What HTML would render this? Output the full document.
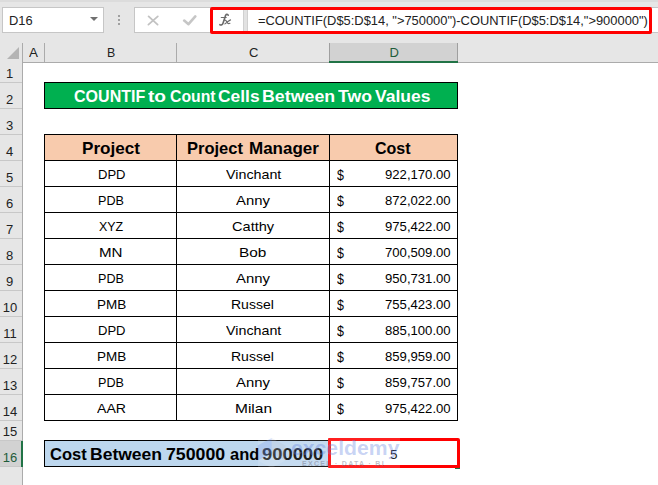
<!DOCTYPE html>
<html><head><meta charset="utf-8"><style>
*{margin:0;padding:0;box-sizing:border-box}
html,body{width:658px;height:485px;overflow:hidden;background:#fff;font-family:"Liberation Sans",sans-serif}
.a{position:absolute}
.t{position:absolute;white-space:nowrap;line-height:1;transform-origin:0 0}
</style></head><body>
<div class="a" style="left:0;top:0;width:658px;height:62px;background:#e6e6e6"></div>
<div class="a" style="left:0;top:0;width:658px;height:2px;background:#dcdcdc"></div>
<div class="a" style="left:2px;top:7px;width:102px;height:26px;background:#fff;border:1px solid #c6c6c6"></div>
<svg class="a" style="left:89px;top:16px" width="10" height="7"><path d="M1 1H9L5 5Z" fill="#707070"/></svg>
<div class="a" style="left:118px;top:15px;width:2px;height:2px;background:#a0a0a0"></div>
<div class="a" style="left:118px;top:19px;width:2px;height:2px;background:#a0a0a0"></div>
<div class="a" style="left:118px;top:23px;width:2px;height:2px;background:#a0a0a0"></div>
<div class="a" style="left:134px;top:7px;width:80px;height:26px;background:#fff;border:1px solid #c6c6c6"></div>
<svg class="a" style="left:146px;top:14px" width="14" height="13"><path d="M2.6 2.4L11.6 10.6M11.8 2.4L2.4 10.6" stroke="#c2c2c2" stroke-width="1.8" stroke-linecap="round" fill="none"/></svg>
<svg class="a" style="left:182px;top:14px" width="15" height="13"><path d="M2.2 6.6L6.5 10.2L13.3 2.4" stroke="#c6c6c6" stroke-width="2.6" stroke-linecap="round" stroke-linejoin="round" fill="none"/></svg>
<div class="a" style="left:212px;top:7px;width:450px;height:26px;background:#fff;border:1px solid #c6c6c6"></div>
<svg class="a" style="left:214px;top:10px" width="24" height="20" viewBox="0 0 24 20"><g fill="none" stroke="#6a6a6a" stroke-linecap="round"><path d="M14.2 5.2C13.7 4.2 12.4 4 11.8 5C11.4 5.6 11.2 6.6 10.9 7.6L9 13.3C8.5 14.8 7.3 15.4 5.9 14.7" stroke-width="1.6"/><path d="M7.3 7.5H12.2" stroke-width="1.2"/><path d="M10.6 10.1C11.5 9.8 12 10.2 12.5 11.2L13.3 12.8C13.7 13.6 14.6 13.8 15.9 13.3M16.5 9.9C15 10.6 12.5 12.6 10.9 13.9" stroke-width="1.2"/></g></svg>
<div class="a" style="left:243px;top:10px;width:5px;height:21px;background:#e2e2e2;border-left:1px solid #d0d0d0;border-right:1px solid #d0d0d0"></div>
<div class="a" style="left:0;top:62px;width:658px;height:1px;background:#ababab"></div>
<svg class="a" style="left:7px;top:47px" width="12" height="12"><path d="M12 0V12H0Z" fill="#b4b4b4"/></svg>
<div class="a" style="left:22px;top:43px;width:1px;height:19px;background:#ababab"></div>
<div class="a" style="left:44px;top:43px;width:1px;height:19px;background:#ababab"></div>
<div class="a" style="left:176px;top:43px;width:1px;height:19px;background:#ababab"></div>
<div class="a" style="left:329px;top:43px;width:129px;height:20px;background:#d2d2d2;border-left:1px solid #9f9f9f;border-right:1px solid #9f9f9f"></div>
<div class="a" style="left:329px;top:61px;width:129px;height:2px;background:#217346"></div>
<div class="a" style="left:0;top:62px;width:22px;height:423px;background:#e6e6e6"></div>
<div class="a" style="left:22px;top:62px;width:1px;height:423px;background:#ababab"></div>
<div class="a" style="left:0;top:82px;width:22px;height:1px;background:#c8c8c8"></div>
<div class="a" style="left:0;top:108px;width:22px;height:1px;background:#c8c8c8"></div>
<div class="a" style="left:0;top:134px;width:22px;height:1px;background:#c8c8c8"></div>
<div class="a" style="left:0;top:160px;width:22px;height:1px;background:#c8c8c8"></div>
<div class="a" style="left:0;top:186px;width:22px;height:1px;background:#c8c8c8"></div>
<div class="a" style="left:0;top:212px;width:22px;height:1px;background:#c8c8c8"></div>
<div class="a" style="left:0;top:238px;width:22px;height:1px;background:#c8c8c8"></div>
<div class="a" style="left:0;top:264px;width:22px;height:1px;background:#c8c8c8"></div>
<div class="a" style="left:0;top:290px;width:22px;height:1px;background:#c8c8c8"></div>
<div class="a" style="left:0;top:316px;width:22px;height:1px;background:#c8c8c8"></div>
<div class="a" style="left:0;top:342px;width:22px;height:1px;background:#c8c8c8"></div>
<div class="a" style="left:0;top:368px;width:22px;height:1px;background:#c8c8c8"></div>
<div class="a" style="left:0;top:394px;width:22px;height:1px;background:#c8c8c8"></div>
<div class="a" style="left:0;top:420px;width:22px;height:1px;background:#c8c8c8"></div>
<div class="a" style="left:0;top:440px;width:22px;height:1px;background:#c8c8c8"></div>
<div class="a" style="left:0;top:466px;width:22px;height:1px;background:#c8c8c8"></div>
<div class="a" style="left:0;top:441px;width:22px;height:25px;background:#d2d2d2"></div>
<div class="a" style="left:21px;top:441px;width:2px;height:26px;background:#217346"></div>
<div class="a" style="left:0;top:492px;width:22px;height:1px;background:#c8c8c8"></div>
<div class="a" style="left:44px;top:82px;width:414px;height:27px;background:#00b050;border:1px solid #000"></div>
<div class="a" style="left:44px;top:134px;width:414px;height:27px;background:#f8cbad"></div>
<div class="a" style="left:44px;top:134px;width:414px;height:1px;background:#000"></div>
<div class="a" style="left:44px;top:160px;width:414px;height:1px;background:#000"></div>
<div class="a" style="left:44px;top:186px;width:414px;height:1px;background:#000"></div>
<div class="a" style="left:44px;top:212px;width:414px;height:1px;background:#000"></div>
<div class="a" style="left:44px;top:238px;width:414px;height:1px;background:#000"></div>
<div class="a" style="left:44px;top:264px;width:414px;height:1px;background:#000"></div>
<div class="a" style="left:44px;top:290px;width:414px;height:1px;background:#000"></div>
<div class="a" style="left:44px;top:316px;width:414px;height:1px;background:#000"></div>
<div class="a" style="left:44px;top:342px;width:414px;height:1px;background:#000"></div>
<div class="a" style="left:44px;top:368px;width:414px;height:1px;background:#000"></div>
<div class="a" style="left:44px;top:394px;width:414px;height:1px;background:#000"></div>
<div class="a" style="left:44px;top:420px;width:414px;height:1px;background:#000"></div>
<div class="a" style="left:44px;top:134px;width:1px;height:287px;background:#000"></div>
<div class="a" style="left:176px;top:134px;width:1px;height:287px;background:#000"></div>
<div class="a" style="left:329px;top:134px;width:1px;height:287px;background:#000"></div>
<div class="a" style="left:457px;top:134px;width:1px;height:287px;background:#000"></div>
<div class="a" style="left:44px;top:440px;width:286px;height:27px;background:#bdd7ee;border:1px solid #000"></div>
<div class="t" id="d16" style="left:9.09px;top:14.00px;font-size:13.5px;color:#222;font-weight:normal;transform:translateY(0px) scaleX(0.9545)">D16</div>
<div class="t" id="formula" style="left:258.05px;top:14.00px;font-size:13.5px;color:#222;font-weight:normal;transform:translateY(0px) scaleX(0.9550)">=COUNTIF(D$5:D$14, "&gt;750000")-COUNTIF(D$5:D$14,"&gt;900000")</div>
<div class="t" id="colA" style="left:29.20px;top:46.00px;font-size:13px;color:#222;font-weight:normal;transform:translateY(0px) scaleX(1.0300)">A</div>
<div class="t" id="colB" style="left:107.00px;top:46.00px;font-size:13px;color:#222;font-weight:normal;transform:translateY(0px) scaleX(0.9500)">B</div>
<div class="t" id="colC" style="left:249.00px;top:46.00px;font-size:13px;color:#222;font-weight:normal;transform:translateY(0px) scaleX(1.0000)">C</div>
<div class="t" id="colD" style="left:389.40px;top:46.00px;font-size:13px;color:#1f5c3a;font-weight:normal;transform:translateY(0px) scaleX(1.0000)">D</div>
<div class="t" id="rn1" style="left:-1.40px;width:22px;text-align:center;top:67.00px;font-size:13px;color:#222">1</div>
<div class="t" id="rn2" style="left:-1.40px;width:22px;text-align:center;top:93.00px;font-size:13px;color:#222">2</div>
<div class="t" id="rn3" style="left:-1.40px;width:22px;text-align:center;top:119.00px;font-size:13px;color:#222">3</div>
<div class="t" id="rn4" style="left:-1.40px;width:22px;text-align:center;top:145.00px;font-size:13px;color:#222">4</div>
<div class="t" id="rn5" style="left:-1.40px;width:22px;text-align:center;top:171.00px;font-size:13px;color:#222">5</div>
<div class="t" id="rn6" style="left:-1.40px;width:22px;text-align:center;top:197.00px;font-size:13px;color:#222">6</div>
<div class="t" id="rn7" style="left:-1.40px;width:22px;text-align:center;top:223.00px;font-size:13px;color:#222">7</div>
<div class="t" id="rn8" style="left:-1.40px;width:22px;text-align:center;top:249.00px;font-size:13px;color:#222">8</div>
<div class="t" id="rn9" style="left:-1.40px;width:22px;text-align:center;top:275.00px;font-size:13px;color:#222">9</div>
<div class="t" id="rn10" style="left:-1.10px;width:22px;text-align:center;top:301.00px;font-size:13px;color:#222">10</div>
<div class="t" id="rn11" style="left:-1.10px;width:22px;text-align:center;top:327.00px;font-size:13px;color:#222">11</div>
<div class="t" id="rn12" style="left:-1.10px;width:22px;text-align:center;top:353.00px;font-size:13px;color:#222">12</div>
<div class="t" id="rn13" style="left:-1.10px;width:22px;text-align:center;top:379.00px;font-size:13px;color:#222">13</div>
<div class="t" id="rn14" style="left:-1.10px;width:22px;text-align:center;top:405.00px;font-size:13px;color:#222">14</div>
<div class="t" id="rn15" style="left:-1.10px;width:22px;text-align:center;top:425.00px;font-size:13px;color:#222">15</div>
<div class="t" id="rn16" style="left:-1.10px;width:22px;text-align:center;top:451.00px;font-size:13px;color:#1f5c3a">16</div>
<div class="t" id="title0" style="left:74.03px;top:88.00px;font-size:16.5px;color:#fff;font-weight:bold;transform:translateY(0px) scaleX(0.9718)">COUNTIF</div>
<div class="t" id="title1" style="left:147.84px;top:88.00px;font-size:16.5px;color:#fff;font-weight:bold;transform:translateY(0px) scaleX(1.1584)">to</div>
<div class="t" id="title2" style="left:170.04px;top:88.00px;font-size:16.5px;color:#fff;font-weight:bold;transform:translateY(0px) scaleX(0.9565)">Count</div>
<div class="t" id="title3" style="left:217.95px;top:88.00px;font-size:16.5px;color:#fff;font-weight:bold;transform:translateY(0px) scaleX(1.0541)">Cells</div>
<div class="t" id="title4" style="left:261.84px;top:88.00px;font-size:16.5px;color:#fff;font-weight:bold;transform:translateY(0px) scaleX(1.0783)">Between</div>
<div class="t" id="title5" style="left:337.93px;top:88.00px;font-size:16.5px;color:#fff;font-weight:bold;transform:translateY(0px) scaleX(1.0667)">Two</div>
<div class="t" id="title6" style="left:374.94px;top:88.00px;font-size:16.5px;color:#fff;font-weight:bold;transform:translateY(0px) scaleX(1.0600)">Values</div>
<div class="t" id="h1" style="left:81.96px;top:140.00px;font-size:16.5px;color:#000;font-weight:bold;transform:translateY(0px) scaleX(1.0367)">Project</div>
<div class="t" id="h2a" style="left:187.00px;top:140.00px;font-size:16.5px;color:#000;font-weight:bold;transform:translateY(0px) scaleX(1.0000)">Project</div>
<div class="t" id="h2b" style="left:248.97px;top:140.00px;font-size:16.5px;color:#000;font-weight:bold;transform:translateY(0px) scaleX(1.0303)">Manager</div>
<div class="t" id="h3" style="left:375.03px;top:140.00px;font-size:16.5px;color:#000;font-weight:bold;transform:translateY(0px) scaleX(0.9714)">Cost</div>
<div class="t" id="b0" style="left:98.16px;top:168.00px;font-size:13.5px;color:#000;font-weight:normal;transform:translateY(0px) scaleX(0.9645)">DPD</div>
<div class="t" id="c0" style="left:225.94px;top:168.00px;font-size:13.5px;color:#000;font-weight:normal;transform:translateY(0px) scaleX(1.0581)">Vinchant</div>
<div class="t" id="dl0" style="left:337.20px;top:168.00px;font-size:14.5px;color:#000;font-weight:normal;transform:translateY(0px) scaleX(0.8600)">$</div>
<div class="t" id="n0" style="left:385.03px;top:168.00px;font-size:13.5px;color:#000;font-weight:normal;transform:translateY(0px) scaleX(0.9715)">922,170.00</div>
<div class="t" id="b1" style="left:98.15px;top:194.00px;font-size:13.5px;color:#000;font-weight:normal;transform:translateY(0px) scaleX(0.9311)">PDB</div>
<div class="t" id="c1" style="left:235.90px;top:194.00px;font-size:13.5px;color:#000;font-weight:normal;transform:translateY(0px) scaleX(1.1011)">Anny</div>
<div class="t" id="dl1" style="left:337.20px;top:194.00px;font-size:14.5px;color:#000;font-weight:normal;transform:translateY(0px) scaleX(0.8600)">$</div>
<div class="t" id="n1" style="left:385.03px;top:194.00px;font-size:13.5px;color:#000;font-weight:normal;transform:translateY(0px) scaleX(0.9715)">872,022.00</div>
<div class="t" id="b2" style="left:99.08px;top:220.00px;font-size:13.5px;color:#000;font-weight:normal;transform:translateY(0px) scaleX(0.9219)">XYZ</div>
<div class="t" id="c2" style="left:231.92px;top:220.00px;font-size:13.5px;color:#000;font-weight:normal;transform:translateY(0px) scaleX(1.0796)">Catthy</div>
<div class="t" id="dl2" style="left:337.20px;top:220.00px;font-size:14.5px;color:#000;font-weight:normal;transform:translateY(0px) scaleX(0.8600)">$</div>
<div class="t" id="n2" style="left:385.03px;top:220.00px;font-size:13.5px;color:#000;font-weight:normal;transform:translateY(0px) scaleX(0.9715)">975,422.00</div>
<div class="t" id="b3" style="left:98.76px;top:246.00px;font-size:13.5px;color:#000;font-weight:normal;transform:translateY(0px) scaleX(1.1195)">MN</div>
<div class="t" id="c3" style="left:238.72px;top:246.00px;font-size:13.5px;color:#000;font-weight:normal;transform:translateY(0px) scaleX(1.1383)">Bob</div>
<div class="t" id="dl3" style="left:337.20px;top:246.00px;font-size:14.5px;color:#000;font-weight:normal;transform:translateY(0px) scaleX(0.8600)">$</div>
<div class="t" id="n3" style="left:385.03px;top:246.00px;font-size:13.5px;color:#000;font-weight:normal;transform:translateY(0px) scaleX(0.9715)">700,509.00</div>
<div class="t" id="b4" style="left:98.15px;top:272.00px;font-size:13.5px;color:#000;font-weight:normal;transform:translateY(0px) scaleX(0.9311)">PDB</div>
<div class="t" id="c4" style="left:235.90px;top:272.00px;font-size:13.5px;color:#000;font-weight:normal;transform:translateY(0px) scaleX(1.1011)">Anny</div>
<div class="t" id="dl4" style="left:337.20px;top:272.00px;font-size:14.5px;color:#000;font-weight:normal;transform:translateY(0px) scaleX(0.8600)">$</div>
<div class="t" id="n4" style="left:385.03px;top:272.00px;font-size:13.5px;color:#000;font-weight:normal;transform:translateY(0px) scaleX(0.9715)">950,731.00</div>
<div class="t" id="b5" style="left:97.00px;top:298.00px;font-size:13.5px;color:#000;font-weight:normal;transform:translateY(0px) scaleX(1.0000)">PMB</div>
<div class="t" id="c5" style="left:231.00px;top:298.00px;font-size:13.5px;color:#000;font-weight:normal;transform:translateY(0px) scaleX(1.0376)">Russel</div>
<div class="t" id="dl5" style="left:337.20px;top:298.00px;font-size:14.5px;color:#000;font-weight:normal;transform:translateY(0px) scaleX(0.8600)">$</div>
<div class="t" id="n5" style="left:385.03px;top:298.00px;font-size:13.5px;color:#000;font-weight:normal;transform:translateY(0px) scaleX(0.9715)">755,423.00</div>
<div class="t" id="b6" style="left:98.16px;top:324.00px;font-size:13.5px;color:#000;font-weight:normal;transform:translateY(0px) scaleX(0.9645)">DPD</div>
<div class="t" id="c6" style="left:225.94px;top:324.00px;font-size:13.5px;color:#000;font-weight:normal;transform:translateY(0px) scaleX(1.0581)">Vinchant</div>
<div class="t" id="dl6" style="left:337.20px;top:324.00px;font-size:14.5px;color:#000;font-weight:normal;transform:translateY(0px) scaleX(0.8600)">$</div>
<div class="t" id="n6" style="left:385.03px;top:324.00px;font-size:13.5px;color:#000;font-weight:normal;transform:translateY(0px) scaleX(0.9715)">885,100.00</div>
<div class="t" id="b7" style="left:97.00px;top:350.00px;font-size:13.5px;color:#000;font-weight:normal;transform:translateY(0px) scaleX(1.0000)">PMB</div>
<div class="t" id="c7" style="left:231.00px;top:350.00px;font-size:13.5px;color:#000;font-weight:normal;transform:translateY(0px) scaleX(1.0376)">Russel</div>
<div class="t" id="dl7" style="left:337.20px;top:350.00px;font-size:14.5px;color:#000;font-weight:normal;transform:translateY(0px) scaleX(0.8600)">$</div>
<div class="t" id="n7" style="left:385.03px;top:350.00px;font-size:13.5px;color:#000;font-weight:normal;transform:translateY(0px) scaleX(0.9715)">859,959.00</div>
<div class="t" id="b8" style="left:98.15px;top:376.00px;font-size:13.5px;color:#000;font-weight:normal;transform:translateY(0px) scaleX(0.9311)">PDB</div>
<div class="t" id="c8" style="left:235.90px;top:376.00px;font-size:13.5px;color:#000;font-weight:normal;transform:translateY(0px) scaleX(1.1011)">Anny</div>
<div class="t" id="dl8" style="left:337.20px;top:376.00px;font-size:14.5px;color:#000;font-weight:normal;transform:translateY(0px) scaleX(0.8600)">$</div>
<div class="t" id="n8" style="left:385.03px;top:376.00px;font-size:13.5px;color:#000;font-weight:normal;transform:translateY(0px) scaleX(0.9715)">859,757.00</div>
<div class="t" id="b9" style="left:96.96px;top:402.00px;font-size:13.5px;color:#000;font-weight:normal;transform:translateY(0px) scaleX(1.0446)">AAR</div>
<div class="t" id="c9" style="left:234.71px;top:402.00px;font-size:13.5px;color:#000;font-weight:normal;transform:translateY(0px) scaleX(1.1471)">Milan</div>
<div class="t" id="dl9" style="left:337.20px;top:402.00px;font-size:14.5px;color:#000;font-weight:normal;transform:translateY(0px) scaleX(0.8600)">$</div>
<div class="t" id="n9" style="left:385.03px;top:402.00px;font-size:13.5px;color:#000;font-weight:normal;transform:translateY(0px) scaleX(0.9715)">975,422.00</div>
<div class="t" id="costb0" style="left:50.00px;top:446.00px;font-size:16.5px;color:#000;font-weight:bold;transform:translateY(0px) scaleX(1.0000)">Cost</div>
<div class="t" id="costb1" style="left:89.94px;top:446.00px;font-size:16.5px;color:#000;font-weight:bold;transform:translateY(0px) scaleX(1.0618)">Between</div>
<div class="t" id="costb2" style="left:165.92px;top:446.00px;font-size:16.5px;color:#000;font-weight:bold;transform:translateY(0px) scaleX(1.0755)">750000</div>
<div class="t" id="costb3" style="left:230.00px;top:446.00px;font-size:16.5px;color:#000;font-weight:bold;transform:translateY(0px) scaleX(1.0000)">and</div>
<div class="t" id="costb4" style="left:261.89px;top:446.00px;font-size:16.5px;color:#000;font-weight:bold;transform:translateY(0px) scaleX(1.1132)">900000</div>
<div class="t" id="five" style="left:390.00px;top:448.00px;font-size:13.5px;color:#000;font-weight:normal;transform:translateY(0px) scaleX(1.0000)">5</div>
<div class="a" style="left:210px;top:7px;width:442px;height:27px;border:3px solid #ff0000;border-radius:2px"></div>
<div class="a" style="left:455px;top:465px;width:5px;height:4px;background:#217346"></div>
<div class="a" style="left:328px;top:438px;width:132px;height:30px;border:3px solid #ff0000;border-radius:1px 2px 1px 1px"></div>
<div class="a" style="left:258px;top:436px;width:142px;height:34px;background:rgba(255,255,255,0.12)"></div>
<svg class="a" style="left:250px;top:432px" width="44" height="40" viewBox="250 432 44 40">
<path d="M271.6 438L285.4 445.5V460.5L271.6 468L257.8 460.5V445.5Z" fill="rgba(255,255,255,0.12)"/>
<path d="M271.6 438L257.8 445.5V460.5L271.6 453Z" fill="rgba(70,120,235,0.22)"/>
<path d="M271.6 438L285.4 445.5V460.5L271.6 453Z" fill="rgba(110,120,150,0.10)"/>
</svg>
<div class="t" id="wm" style="left:290.5px;top:438px;font-size:20px;font-weight:bold;color:rgba(100,130,225,0.36);transform:scaleX(1.06);transform-origin:0 0">exceldemy</div>
<div class="t" style="left:302px;top:459.5px;font-size:7px;font-weight:bold;color:rgba(110,110,130,0.45);letter-spacing:1.3px">EXCEL · DATA · BI</div>
</body></html>
